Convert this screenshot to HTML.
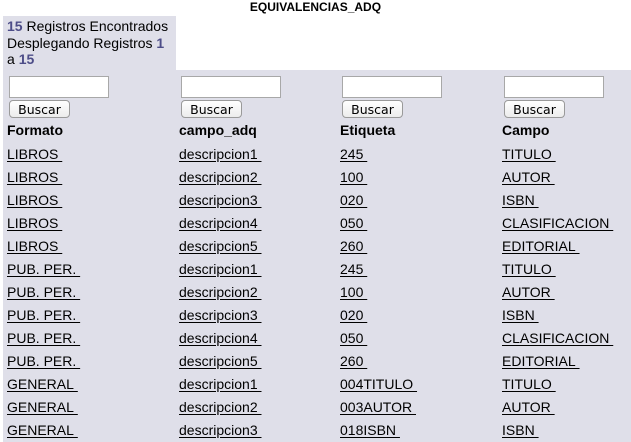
<!DOCTYPE html>
<html><head><meta charset="utf-8"><style>
*{margin:0;padding:0;box-sizing:border-box}
body{width:631px;height:442px;overflow:hidden;background:#fff;font-family:"Liberation Sans",Arial,sans-serif;font-size:14px;color:#000;position:relative}
.t{position:absolute;white-space:nowrap;line-height:16px}
.title{left:0;width:631px;text-align:center;top:0;font-weight:bold;font-size:12px;line-height:15px}
.panel{position:absolute;left:3px;top:16px;width:628px;height:426px;background:#dfdfe9}
.wb{position:absolute;left:176px;top:16px;width:455px;height:54px;background:#fff}
.n{color:#4d4d88;font-weight:bold}
.in{position:absolute;width:100px;height:22px;background:#fff;border:1px solid #a8a8a8}
.bt{position:absolute;width:61px;height:18px;border:1px solid #9a9a9a;border-radius:4px;background:linear-gradient(#fff,#ececec);font-size:12.5px;text-align:center;line-height:16px;font-family:"DejaVu Sans",sans-serif;padding-top:1px}
.h{font-weight:bold}
u{text-decoration:underline;text-underline-offset:2px}
</style></head><body>
<div class="t title">EQUIVALENCIAS_ADQ</div>
<div class="panel"></div>
<div class="wb"></div>
<div class="t" style="left:7px;top:18px;line-height:16.5px"><span class="n">15</span> Registros Encontrados<br>Desplegando Registros <span class="n">1</span><br>a <span class="n">15</span></div>
<div class="in" style="left:9px;top:76px"></div><div class="bt" style="left:9px;top:100px">Buscar</div>
<div class="in" style="left:181px;top:76px"></div><div class="bt" style="left:181px;top:100px">Buscar</div>
<div class="in" style="left:342px;top:76px"></div><div class="bt" style="left:342px;top:100px">Buscar</div>
<div class="in" style="left:504px;top:76px"></div><div class="bt" style="left:504px;top:100px">Buscar</div>
<div class="t h" style="left:7px;top:122px">Formato</div>
<div class="t h" style="left:179px;top:122px">campo_adq</div>
<div class="t h" style="left:340px;top:122px">Etiqueta</div>
<div class="t h" style="left:502px;top:122px">Campo</div>
<div id="rows"></div>
<script>
var d=[["LIBROS","descripcion1","245","TITULO"],["LIBROS","descripcion2","100","AUTOR"],["LIBROS","descripcion3","020","ISBN"],["LIBROS","descripcion4","050","CLASIFICACION"],["LIBROS","descripcion5","260","EDITORIAL"],["PUB. PER.","descripcion1","245","TITULO"],["PUB. PER.","descripcion2","100","AUTOR"],["PUB. PER.","descripcion3","020","ISBN"],["PUB. PER.","descripcion4","050","CLASIFICACION"],["PUB. PER.","descripcion5","260","EDITORIAL"],["GENERAL","descripcion1","004TITULO","TITULO"],["GENERAL","descripcion2","003AUTOR","AUTOR"],["GENERAL","descripcion3","018ISBN","ISBN"]];
var xs=[7,179,340,502],h="";
d.forEach(function(r,i){r.forEach(function(c,j){h+='<div class="t" style="left:'+xs[j]+'px;top:'+(146+i*23)+'px"><u>'+c+'&nbsp;</u></div>';});});
document.getElementById("rows").innerHTML=h;
</script>
</body></html>
